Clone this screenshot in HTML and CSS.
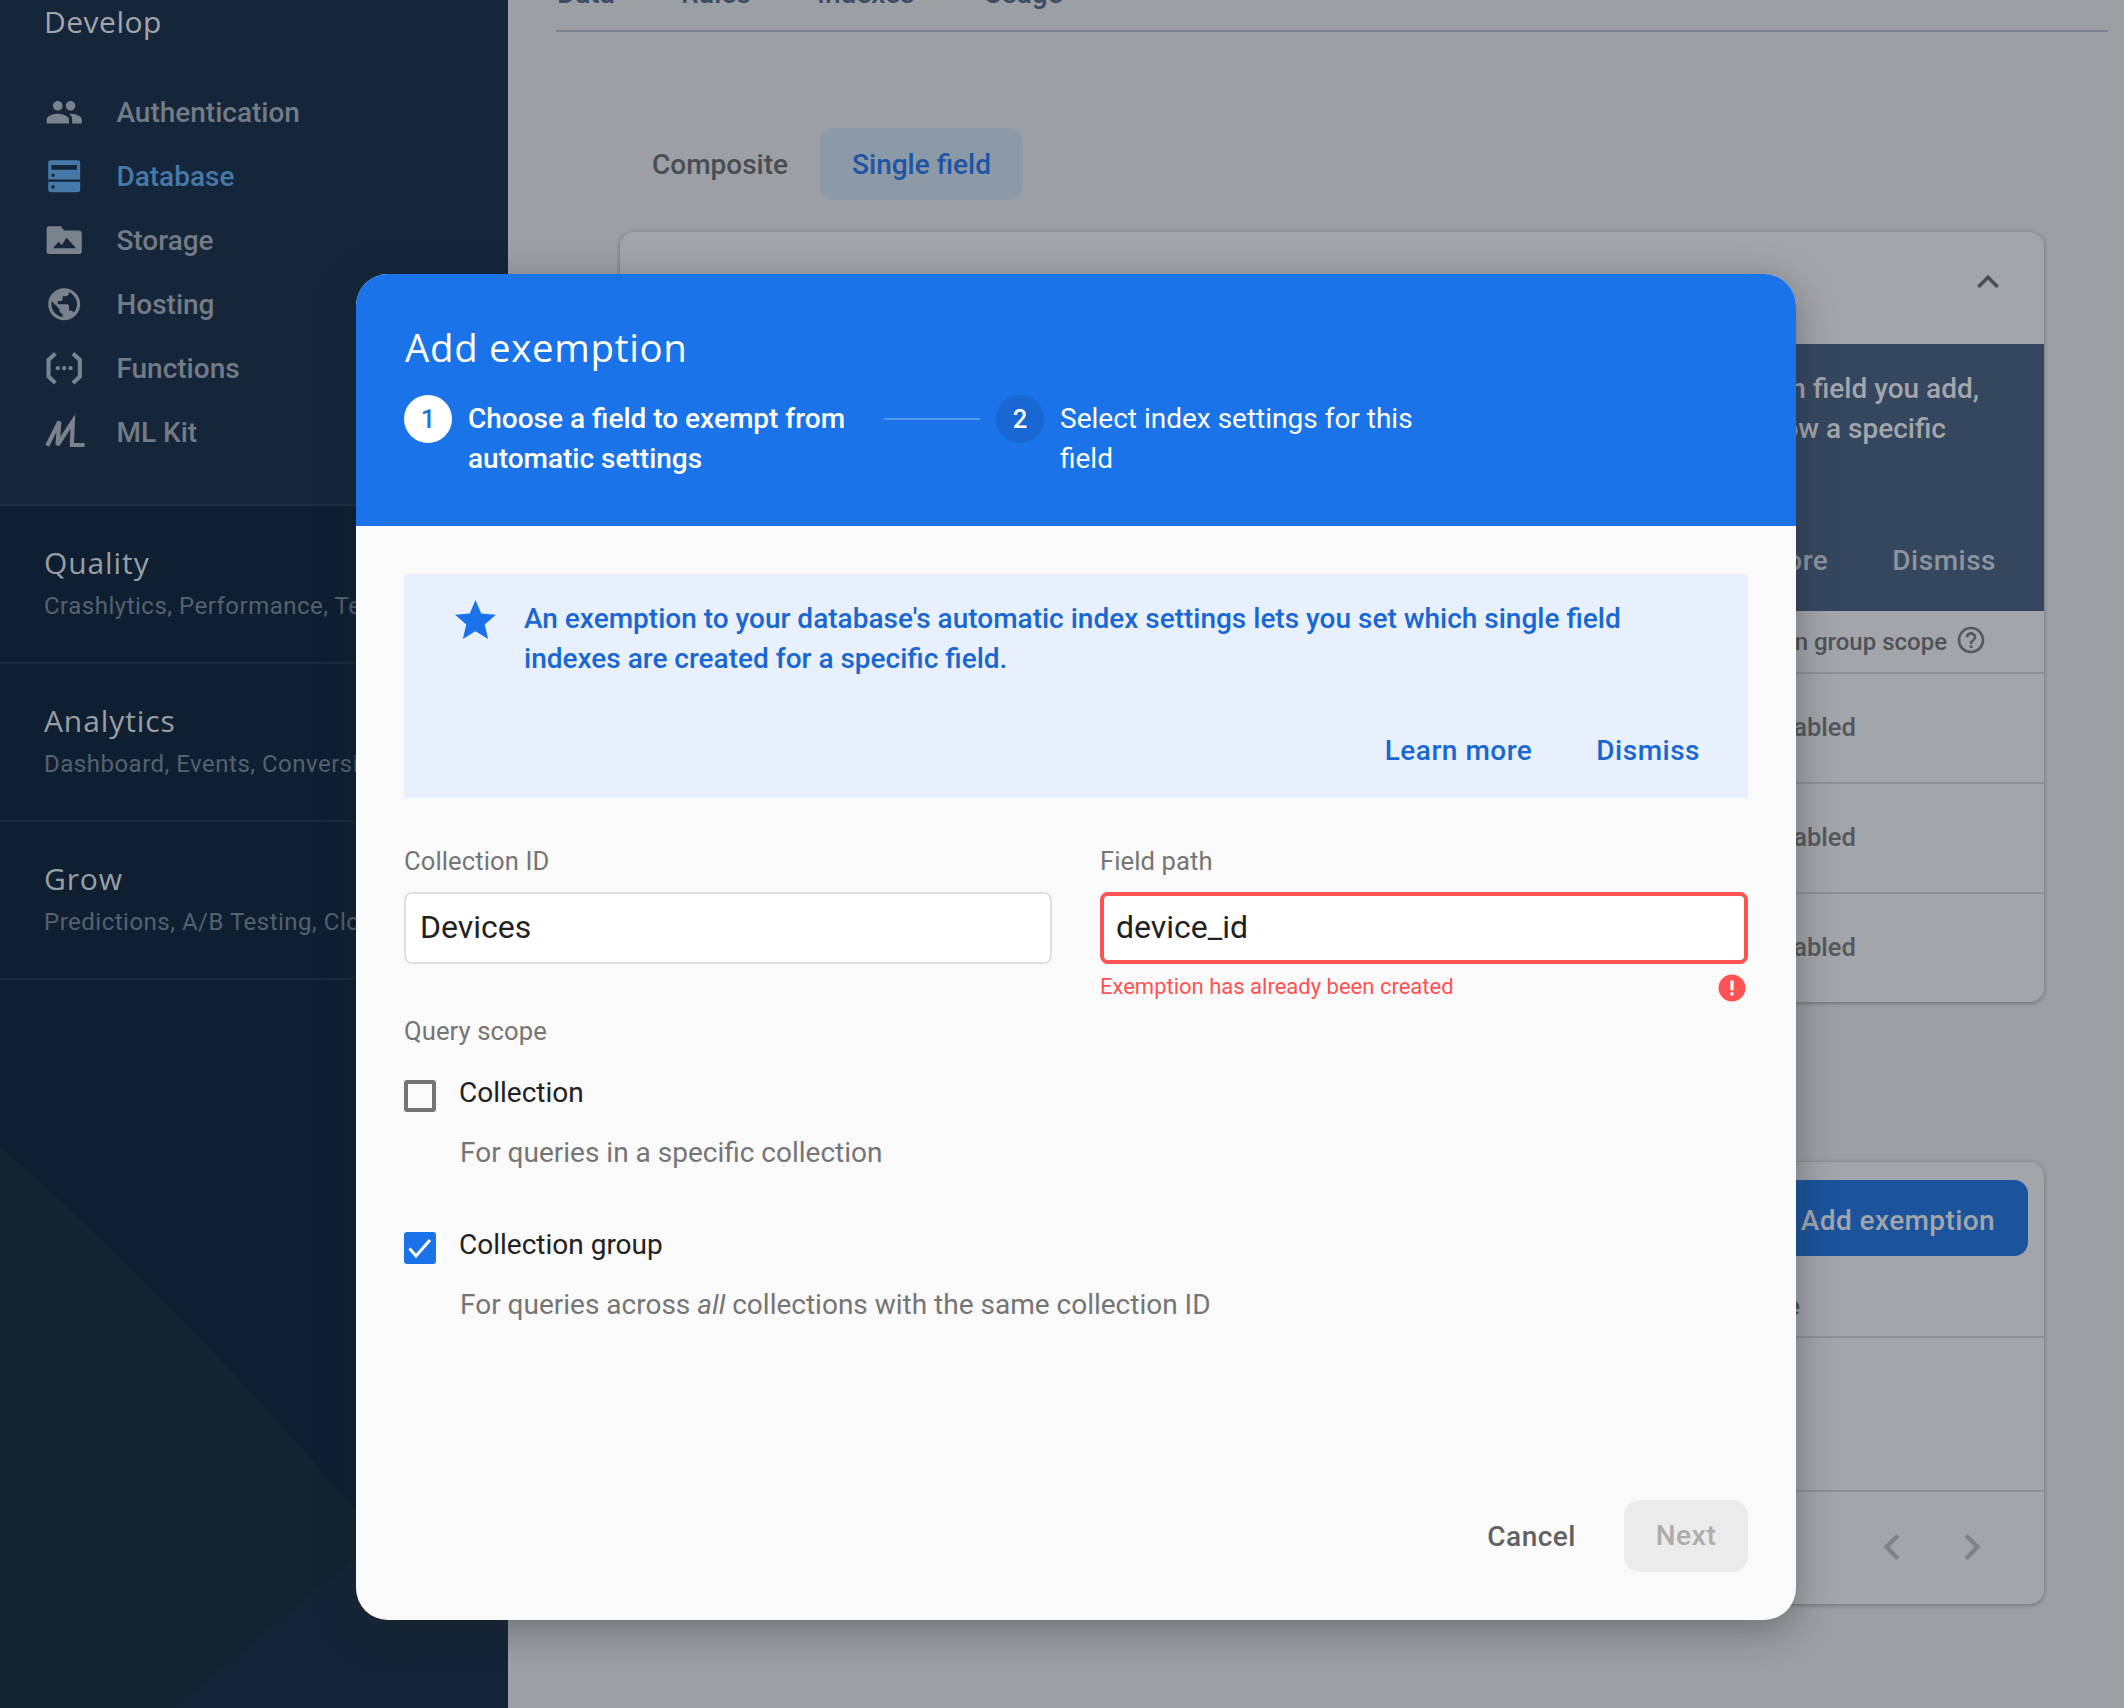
FILE: index.html
```html
<!DOCTYPE html>
<html lang="en">
<head>
<meta charset="utf-8">
<title>Add exemption</title>
<link rel="stylesheet" href="styles.css">
</head>
<body>
<div class="app">
  <aside class="sidebar">
    <svg class="side-art" viewBox="0 0 508 1708" aria-hidden="true">
      <path class="art-a" d="M0 1146 Q180 1305 356 1510 L508 1690 V1708 H0 Z"/>
      <path class="art-b" d="M173 1708 L356 1557 L508 1510 V1708 Z"/>
    </svg>
    <div class="develop">
      <h2 class="develop-title">Develop</h2>
      <nav class="nav">
        <a class="nav-item"><svg class="nav-icon" viewBox="0 0 24 24"><path d="M16 11c1.66 0 2.99-1.34 2.99-3S17.66 5 16 5c-1.66 0-3 1.34-3 3s1.34 3 3 3zm-8 0c1.66 0 2.99-1.34 2.99-3S9.66 5 8 5C6.34 5 5 6.34 5 8s1.34 3 3 3zm0 2c-2.33 0-7 1.17-7 3.5V19h14v-2.5c0-2.33-4.67-3.5-7-3.5zm8 0c-.29 0-.62.02-.97.05 1.16.84 1.97 1.97 1.97 3.45V19h6v-2.5c0-2.33-4.67-3.5-7-3.5z"/></svg>Authentication</a>
        <a class="nav-item active"><svg class="nav-icon" viewBox="0 0 24 24"><path fill-rule="evenodd" d="M3.5 2h17A1.5 1.5 0 0 1 22 3.500V14H2V3.500A1.500 1.500 0 0 1 3.500 2zM4 5v3h16V5zM5 10.300a1.100 1.100 0 1 0 0 2.200 1.100 1.100 0 0 0 0-2.200zM2 15.500h20V20.500A1.500 1.500 0 0 1 20.500 22h-17A1.500 1.500 0 0 1 2 20.500zM5 17.600a1.100 1.100 0 1 0 0 2.200 1.100 1.100 0 0 0 0-2.200z"/></svg>Database</a>
        <a class="nav-item"><svg class="nav-icon" viewBox="0 0 24 24"><path fill-rule="evenodd" d="M21 6h-9L10 3.300H2.500A1.500 1.500 0 0 0 1 4.800V19.200A1.500 1.500 0 0 0 2.500 20.700h19A1.500 1.500 0 0 0 23 19.200V8a2 2 0 0 0-2-2zM5 17l3.500-4 2 2 3-4.500L19.500 17z"/></svg>Storage</a>
        <a class="nav-item"><svg class="nav-icon" viewBox="0 0 24 24"><path d="M12 2C6.480 2 2 6.480 2 12s4.480 10 10 10 10-4.480 10-10S17.520 2 12 2zm-1 17.930c-3.950-.490-7-3.850-7-7.930 0-.620.080-1.210.210-1.790L9 15v1c0 1.100.900 2 2 2v1.930zm6.900-2.540c-.260-.810-1-1.390-1.900-1.390h-1v-3c0-.550-.450-1-1-1H8v-2h2c.550 0 1-.450 1-1V7h2c1.100 0 2-.900 2-2v-.410c2.930 1.190 5 4.060 5 7.410 0 2.080-.800 3.970-2.100 5.390z"/></svg>Hosting</a>
        <a class="nav-item"><svg class="nav-icon" viewBox="0 0 24 24"><path class="stroke" d="M6.500 2.800 2.200 6.800V17.200L6.500 21.200M17.500 2.800 21.800 6.800V17.200L17.500 21.200"/><circle cx="8" cy="12" r="1.300"/><circle cx="12" cy="12" r="1.300"/><circle cx="16" cy="12" r="1.300"/></svg>Functions</a>
        <a class="nav-item"><svg class="nav-icon ml" viewBox="0 0 24 24"><path class="stroke" d="M1.400 20.500 9 5.300 7.800 20 17.400 5.300 16.800 20H24.800"/></svg>ML Kit</a>
      </nav>
    </div>
    <section class="group"><h3 class="group-title">Quality</h3><p class="group-sub">Crashlytics, Performance, Test Lab</p></section>
    <section class="group"><h3 class="group-title">Analytics</h3><p class="group-sub">Dashboard, Events, Conversions, Audiences</p></section>
    <section class="group"><h3 class="group-title">Grow</h3><p class="group-sub">Predictions, A/B Testing, Cloud Messaging</p></section>
  </aside>

  <main class="main">
    <div class="tabs">
      <span class="tab tab-data">Data</span><span class="tab tab-rules">Rules</span><span class="tab tab-indexes">Indexes</span><span class="tab">Usage</span>
    </div>
    <div class="content">
      <div class="subnav">
        <span class="sub-btn">Composite</span>
        <span class="sub-btn selected">Single field</span>
      </div>
      <section class="card card-top">
        <div class="card-head"><svg class="chev-up" viewBox="0 0 24 24"><path d="M7.410 15.410 12 10.830l4.590 4.580L18 14l-6-6-6 6z"/></svg></div>
        <div class="dark-note">
          <p class="dark-line line-a">Single field indexes apply to each exemption field you add,</p>
          <p class="dark-line line-b">unless the settings follow a specific</p>
          <div class="dark-actions"><span class="dark-learn">Learn more</span><span>Dismiss</span></div>
        </div>
        <div class="table-head">Collection group scope<svg class="help" viewBox="0 0 24 24"><path d="M11 18h2v-2h-2v2zm1-16C6.480 2 2 6.480 2 12s4.480 10 10 10 10-4.480 10-10S17.520 2 12 2zm0 18c-4.410 0-8-3.590-8-8s3.590-8 8-8 8 3.590 8 8-3.590 8-8 8zm0-14c-2.210 0-4 1.790-4 4h2c0-1.100.900-2 2-2s2 .900 2 2c0 2-3 1.750-3 5h2c0-2.250 3-2.500 3-5 0-2.210-1.790-4-4-4z"/></svg></div>
        <div class="table-row">Enabled</div>
        <div class="table-row">Enabled</div>
        <div class="table-row last">Enabled</div>
      </section>
      <section class="card card-bottom">
        <div class="cb-top"><span class="add-btn">Add exemption</span></div>
        <div class="cb-head">Query scope</div>
        <div class="cb-empty"></div>
        <div class="cb-foot">
          <svg class="pager" viewBox="0 0 24 24"><path d="M15.410 7.410 14 6l-6 6 6 6 1.410-1.410L10.830 12z"/></svg>
          <svg class="pager" viewBox="0 0 24 24"><path d="M10 6 8.590 7.410 13.170 12l-4.580 4.590L10 18l6-6z"/></svg>
        </div>
      </section>
    </div>
  </main>
</div>

<div class="modal" role="dialog">
  <header class="modal-head">
    <h1 class="modal-title">Add exemption</h1>
    <div class="steps">
      <span class="step-num current">1</span>
      <span class="step-text strong">Choose a field to exempt from automatic settings</span>
      <span class="step-line"></span>
      <span class="step-num next">2</span>
      <span class="step-text second">Select index settings for this field</span>
    </div>
  </header>
  <div class="modal-body">
    <div class="note">
      <svg class="star" viewBox="0 0 24 24"><path d="M12 17.270 18.180 21l-1.640-7.030L22 9.240l-7.190-.610L12 2 9.190 8.630 2 9.240l5.460 4.730L5.820 21z"/></svg>
      <div class="note-main">
        <p class="note-text">An exemption to your database's automatic index settings lets you set which single field indexes are created for a specific field.</p>
        <div class="note-actions"><span>Learn more</span><span>Dismiss</span></div>
      </div>
    </div>
    <div class="fields">
      <div class="field">
        <label class="label">Collection ID</label>
        <div class="input">Devices</div>
      </div>
      <div class="field">
        <label class="label">Field path</label>
        <div class="input invalid">device_id</div>
        <div class="error"><span>Exemption has already been created</span>
          <svg class="error-icon" viewBox="0 0 28 28"><circle cx="14" cy="14" r="13.500"/><rect class="mark" x="12.400" y="6.500" width="3.200" height="10" rx="1"/><rect class="mark" x="12.400" y="18.300" width="3.200" height="3.200" rx="1"/></svg>
        </div>
      </div>
    </div>
    <div class="label scope-label">Query scope</div>
    <div class="option">
      <span class="check"></span>
      <div class="opt-title">Collection</div>
      <div class="opt-desc">For queries in a specific collection</div>
    </div>
    <div class="option second-opt">
      <span class="check checked"><svg viewBox="0 0 32 32"><path d="M5.500 16.500 12 24 26 8"/></svg></span>
      <div class="opt-title">Collection group</div>
      <div class="opt-desc">For queries across <em>all</em> collections with the same collection ID</div>
    </div>
    <footer class="modal-foot">
      <span class="cancel">Cancel</span>
      <span class="next-btn">Next</span>
    </footer>
  </div>
</div>
</body>
</html>
```
FILE: styles.css
```css
* { box-sizing: border-box; }
html, body { margin: 0; height: 100%; }
body { overflow: hidden; font-family: Roboto, "Liberation Sans", sans-serif; background: #9c9fa3; position: relative; }
h1, h2, h3, p { margin: 0; font-weight: 400; }

.app { display: flex; height: 1708px; overflow: hidden; }

/* sidebar */
.sidebar { position: relative; width: 508px; flex: none; background: #0e1f31; overflow: hidden; }
.side-art { position: absolute; left: 0; top: 0; width: 508px; height: 1708px; }
.art-a { fill: #122332; }
.art-b { fill: #152537; }
.develop { position: relative; height: 506px; background: #15263a; border-bottom: 2px solid #1f2f42; }
.develop-title { height: 44px; margin-bottom: 36px; padding-left: 44px; font-family: "Open Sans", sans-serif; font-size: 30px; line-height: 43px; letter-spacing: .5px; color: #a1a5ab; }
.nav-item { display: flex; align-items: center; height: 64px; padding-left: 45px; font-size: 28px; font-weight: 500; color: #737b85; }
.nav-icon { width: 38.400px; height: 38.400px; margin-right: 33px; fill: #7a828c; overflow: visible; flex: none; }
.nav-icon .stroke { fill: none; stroke: #7a828c; stroke-width: 2.600; }
.active { color: #4679a8; }
.active .nav-icon { fill: #4679a8; }
.group { position: relative; height: 158px; padding: 39px 0 0 44px; border-bottom: 2px solid #1a2b3e; white-space: nowrap; }
.group-title { font-family: "Open Sans", sans-serif; font-size: 30px; line-height: 36px; letter-spacing: .9px; color: #9a9ea3; }
.group-sub { margin-top: 9px; font-size: 24px; line-height: 32px; letter-spacing: .5px; color: #566170; }

/* main */
.main { flex: 1; min-width: 0; margin-top: -32px; }
.tabs { display: flex; height: 64px; margin: 0 16px 0 48px; padding-top: 10px; border-bottom: 2px solid #7b8594; font-size: 28px; font-weight: 500; line-height: 32px; color: #3b4a66; }
.tab-data { width: 125px; padding-left: 1px; }
.tab-rules { width: 136px; }
.tab-indexes { width: 167px; }
.content { margin: 96px 80px 0 112px; }
.subnav { display: flex; height: 72px; }
.sub-btn { padding: 0 32px; font-size: 28px; font-weight: 500; line-height: 74px; color: #4a4d52; border-radius: 14px; }
.selected { background: #8c99a6; color: #1d54a5; }

.card { background: #a2a5a9; border-radius: 14px; box-shadow: 0 1px 4px rgba(40,44,52,.45); font-weight: 500; }
.card-top { margin-top: 32px; height: 770px; overflow: hidden; color: #4f5256; }
.card-head { height: 112px; display: flex; justify-content: flex-end; padding: 28px 36px 0 0; }
.chev-up { width: 44px; height: 44px; fill: #4a4d52; margin-right: -2px; }
.dark-note { height: 267px; padding-top: 25px; background: #35475f; color: #a3a6aa; font-size: 28px; line-height: 40px; white-space: nowrap; overflow: hidden; text-align: right; }
.dark-line { font-weight: 500; }
.line-a { padding-right: 65px; }
.line-b { padding-right: 98px; }
.dark-actions { display: flex; justify-content: flex-end; gap: 64px; margin-top: 92px; padding-right: 48px; color: #8e949c; font-weight: 500; letter-spacing: .5px; }
.table-head { display: flex; justify-content: flex-end; align-items: center; height: 63px; padding: 0 57px 0 0; font-size: 24px; border-bottom: 2px solid #8d9095; white-space: nowrap; color: #4f5256; }
.help { width: 32px; height: 32px; margin-left: 8px; margin-top: -3px; fill: #55585c; }
.table-row { display: flex; align-items: center; justify-content: flex-end; height: 110px; padding: 0 188px 2px 0; font-size: 25.600px; border-bottom: 2px solid #8d9095; color: #55585c; }
.table-row.last { border-bottom-color: transparent; }

.card-bottom { margin-top: 160px; height: 442px; }
.cb-top { display: flex; justify-content: flex-end; padding: 18px 16px 0 0; height: 114px; }
.add-btn { height: 76px; padding: 0 33px 0 64px; border-radius: 14px; background: #1b539c; color: #a2a5a9; font-size: 28px; line-height: 82px; letter-spacing: .4px; }
.cb-head { display: flex; align-items: center; justify-content: flex-end; height: 62px; padding-right: 244px; border-bottom: 2px solid #8d9095; font-size: 25.600px; color: #4f5256; }
.cb-empty { height: 154px; border-bottom: 2px solid #8d9095; }
.cb-foot { display: flex; justify-content: flex-end; gap: 28px; padding: 29px 46px 0 0; }
.pager { width: 52px; height: 52px; fill: #7f8388; }

/* modal */
.modal { position: absolute; left: 356px; top: 274px; width: 1440px; height: 1346px; display: flex; flex-direction: column; border-radius: 32px; overflow: hidden; background: #fafafa; box-shadow: 0 10px 38px rgba(30,34,42,.38); }
.modal-head { height: 252px; flex: none; padding: 49px 48px 0; background: #1a73e8; color: #fff; }
.modal-title { font-family: "Open Sans", sans-serif; font-weight: 500; font-size: 38.400px; line-height: 48px; letter-spacing: .7px; padding-left: 1px; }
.steps { display: flex; align-items: flex-start; margin-top: 24px; }
.step-num { width: 48px; height: 48px; flex: none; border-radius: 50%; text-align: center; font-size: 25.600px; font-weight: 500; line-height: 48px; }
.current { background: #fff; color: #1a73e8; }
.next { background: #1967d2; color: #fff; }
.step-text { margin: 4px 0 0 16px; font-size: 28px; line-height: 40px; }
.strong { width: 392px; flex: none; font-weight: 500; }
.second { width: 372px; flex: none; }
.step-line { width: 96px; height: 2px; flex: none; margin: 23px 16px 0 24px; background: #5598ee; }

.modal-body { flex: 1; display: flex; flex-direction: column; padding: 48px 48px 48px; }
.note { display: flex; height: 224px; flex: none; background: #e8f0fd; color: #1967d2; font-size: 28px; font-weight: 500; line-height: 40px; }
.star { width: 49px; height: 49px; flex: none; margin: 22px 24px 0 47px; fill: #1a73e8; }
.note-main { flex: 1; padding: 25px 48px 0 0; }
.note-text { font-weight: 500; }
.note-actions { display: flex; justify-content: flex-end; gap: 64px; margin-top: 52px; letter-spacing: .5px; }
.fields { display: grid; grid-template-columns: 1fr 1fr; gap: 48px; margin-top: 45px; flex: none; }
.label { display: block; font-size: 25.600px; line-height: 36px; letter-spacing: .1px; color: #757575; }
.input { height: 72px; margin-top: 13px; padding-left: 14px; border: 2px solid #e0e0e0; border-radius: 8px; background: #fff; font-size: 32px; line-height: 66px; color: #212121; }
.invalid { padding-left: 12px; border: 4px solid #ff5252; line-height: 62px; }
.error { display: flex; justify-content: space-between; align-items: center; margin-top: 8px; padding-right: 2px; height: 30px; font-size: 22px; line-height: 28px; color: #ff5252; }
.error-icon { width: 28px; height: 28px; margin-top: 2px; fill: #ff5252; }
.mark { fill: #fff; }
.scope-label { margin-top: 11px; }
.option { display: grid; grid-template-columns: 32px 1fr; column-gap: 23px; margin-top: 24px; }
.second-opt { margin-top: 52px; }
.check { grid-row: 1; width: 32px; height: 32px; margin-top: 7px; border: 4px solid #757575; border-radius: 3px; }
.checked { border: 0; background: #1a73e8; }
.checked svg { display: block; width: 32px; height: 32px; }
.checked path { fill: none; stroke: #fff; stroke-width: 3; }
.opt-title { font-size: 28px; line-height: 40px; color: #212121; }
.opt-desc { grid-column: 2; margin: 20px 0 0 1px; font-size: 28px; line-height: 40px; color: #757575; }
.modal-foot { display: flex; align-items: center; justify-content: flex-end; gap: 48px; margin-top: auto; }
.cancel { font-size: 28px; font-weight: 500; color: #616161; letter-spacing: .5px; }
.next-btn { width: 124px; height: 72px; border-radius: 16px; background: #ebebeb; color: #acacac; font-size: 28px; font-weight: 500; line-height: 72px; text-align: center; letter-spacing: .6px; }
```
